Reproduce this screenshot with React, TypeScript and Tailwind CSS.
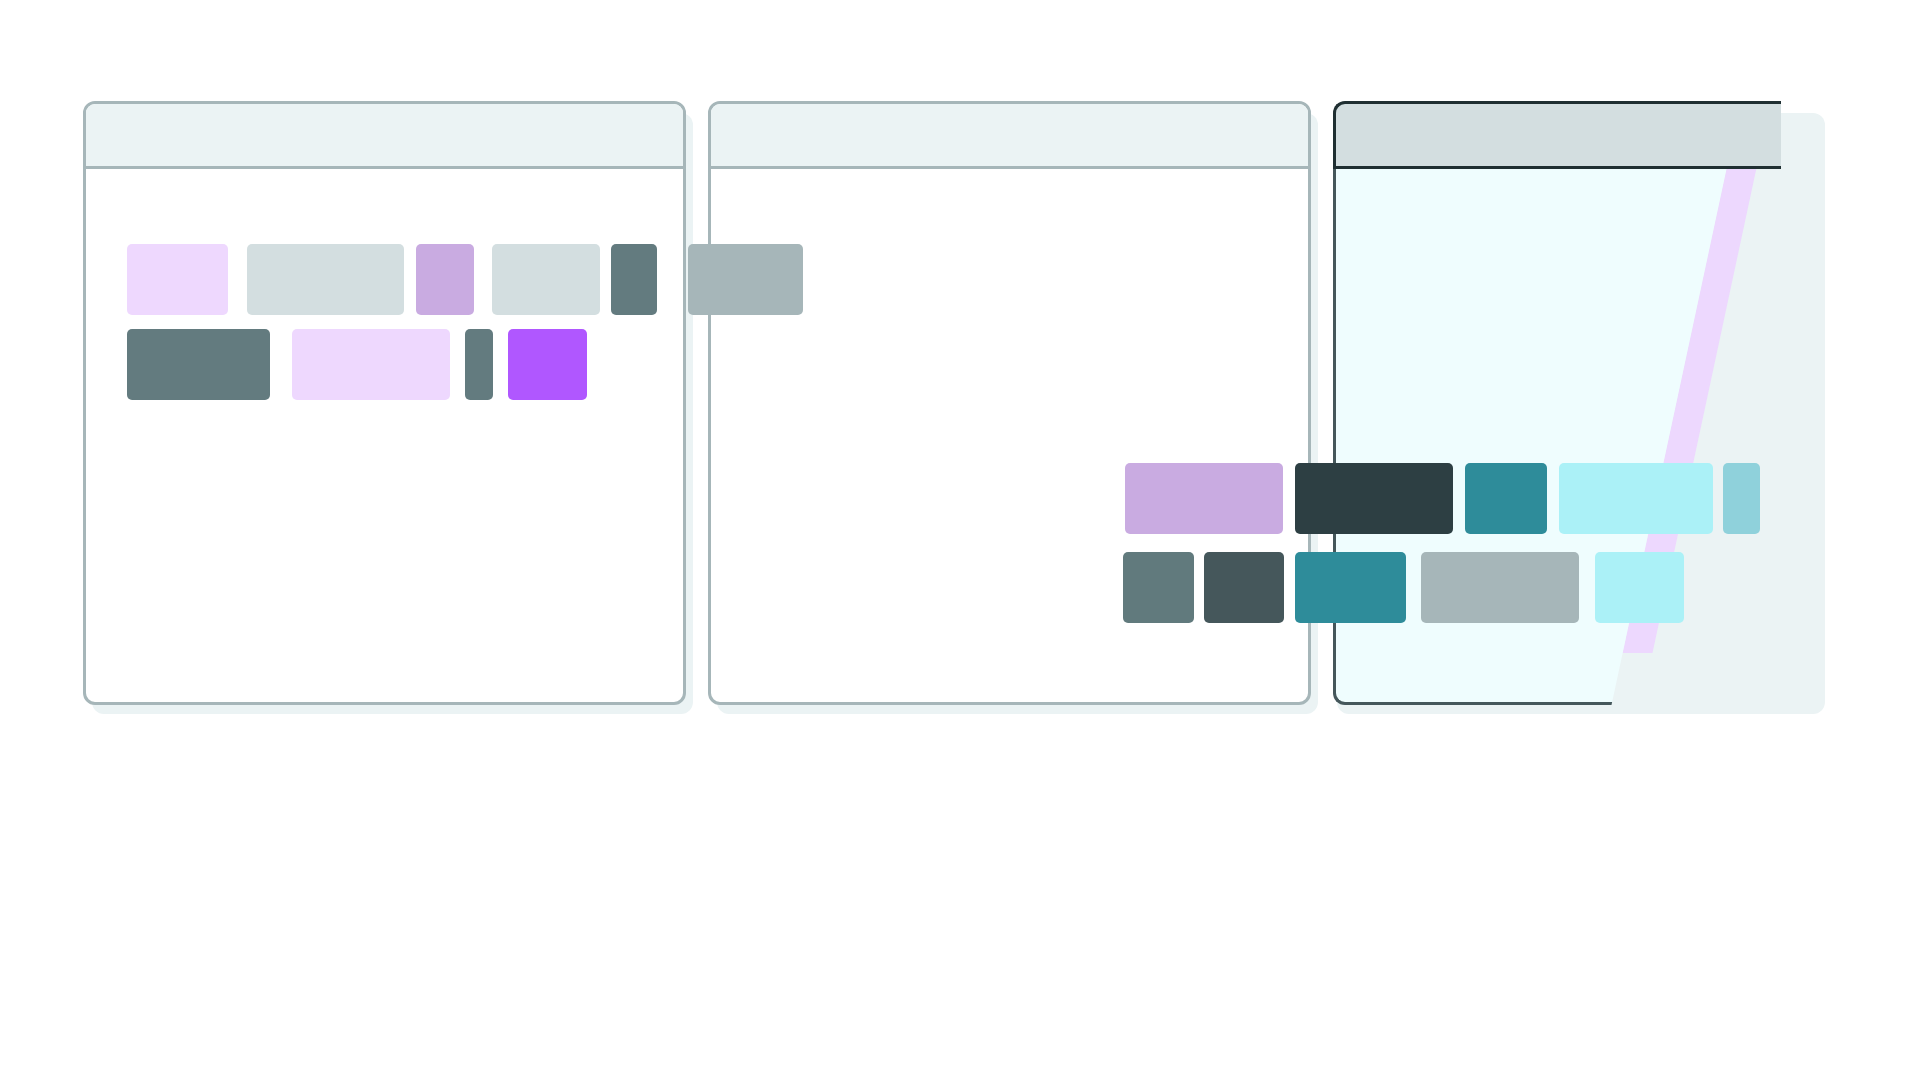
type Card = { w: string; ml: string; color: string };

const rowOne: Card[] = [
  { w: 'w-[101px]', ml: 'ml-0', color: 'bg-[#eed8fe]' },
  { w: 'w-[157px]', ml: 'ml-[19px]', color: 'bg-[#d3dee0]' },
  { w: 'w-[58px]', ml: 'ml-[12px]', color: 'bg-[#c9abe1]' },
  { w: 'w-[108px]', ml: 'ml-[18px]', color: 'bg-[#d3dee0]' },
  { w: 'w-[46px]', ml: 'ml-[11px]', color: 'bg-[#637b7f]' },
  { w: 'w-[115px]', ml: 'ml-[31px]', color: 'bg-[#a6b6b9]' },
];

const rowTwo: Card[] = [
  { w: 'w-[143px]', ml: 'ml-0', color: 'bg-[#637b7f]' },
  { w: 'w-[158px]', ml: 'ml-[22px]', color: 'bg-[#eed8fe]' },
  { w: 'w-[28px]', ml: 'ml-[15px]', color: 'bg-[#637b7f]' },
  { w: 'w-[79px]', ml: 'ml-[15px]', color: 'bg-[#b057ff]' },
];

const rowThree: Card[] = [
  { w: 'w-[158px]', ml: 'ml-0', color: 'bg-[#c9abe1]' },
  { w: 'w-[158px]', ml: 'ml-[12px]', color: 'bg-[#2d3f43]' },
  { w: 'w-[82px]', ml: 'ml-[12px]', color: 'bg-[#2e8c9a]' },
  { w: 'w-[154px]', ml: 'ml-[12px]', color: 'bg-[#abf1f7]' },
  { w: 'w-[37px]', ml: 'ml-[10px]', color: 'bg-[#8fd1db]' },
];

const rowFour: Card[] = [
  { w: 'w-[71px]', ml: 'ml-0', color: 'bg-[#617a7d]' },
  { w: 'w-[80px]', ml: 'ml-[10px]', color: 'bg-[#45575b]' },
  { w: 'w-[111px]', ml: 'ml-[11px]', color: 'bg-[#2e8c9a]' },
  { w: 'w-[158px]', ml: 'ml-[15px]', color: 'bg-[#a6b6b9]' },
  { w: 'w-[89px]', ml: 'ml-[16px]', color: 'bg-[#abf1f7]' },
];

const CardRow = ({ cards, pos }: { cards: Card[]; pos: string }) => (
  <div className={`absolute z-20 flex h-[71px] ${pos}`}>
    {cards.map((c, i) => (
      <div key={i} className={`h-full shrink-0 rounded-[5px] ${c.w} ${c.ml} ${c.color}`} />
    ))}
  </div>
);

const Column = () => (
  <div className="relative h-[604px] w-[603px] shrink-0">
    {/* offset backdrop */}
    <div className="absolute left-[9px] top-[12px] h-[601px] w-[601px] rounded-[12px] bg-[#ebf3f4]" />
    <div className="relative flex h-full flex-col overflow-hidden rounded-[12px] border-[3px] border-[#a6b6b9] bg-white">
      <div className="h-[65px] shrink-0 border-b-[3px] border-[#a6b6b9] bg-[#ebf3f4]" />
    </div>
  </div>
);

const ActiveColumn = () => (
  <div className="relative h-[604px] w-[603px] shrink-0">
    <div className="absolute left-[4px] top-[12px] h-[601px] w-[488px] rounded-[12px] bg-[#ebf3f4]" />
    <svg className="absolute left-0 top-0" width="603" height="604">
      <polygon points="395,60 425,60 319.5,552 289.5,552" fill="#edd8fe" />
    </svg>
    <div className="relative h-[68px] w-[448px] rounded-tl-[12px] border-b-[3px] border-l-[3px] border-t-[3px] border-[#1f2f32] bg-[#d3dee0]" />
    <div className="relative h-[536px] w-[448px] rounded-bl-[12px] border-b-[3px] border-l-[3px] border-[#45575b] bg-[#effdfe] [clip-path:polygon(0_0,393.5px_0,278.5px_100%,0_100%)]" />
  </div>
);

export default function App() {
  return (
    <div className="relative h-[1081px] w-[1920px] overflow-hidden bg-white">
      <div className="flex gap-[22px] pl-[83px] pt-[101px]">
        <Column />
        <Column />
        <ActiveColumn />
      </div>

      <CardRow cards={rowOne} pos="left-[127px] top-[244px]" />
      <CardRow cards={rowTwo} pos="left-[127px] top-[329px]" />
      <CardRow cards={rowThree} pos="left-[1125px] top-[463px]" />
      <CardRow cards={rowFour} pos="left-[1123px] top-[552px]" />
    </div>
  );
}
